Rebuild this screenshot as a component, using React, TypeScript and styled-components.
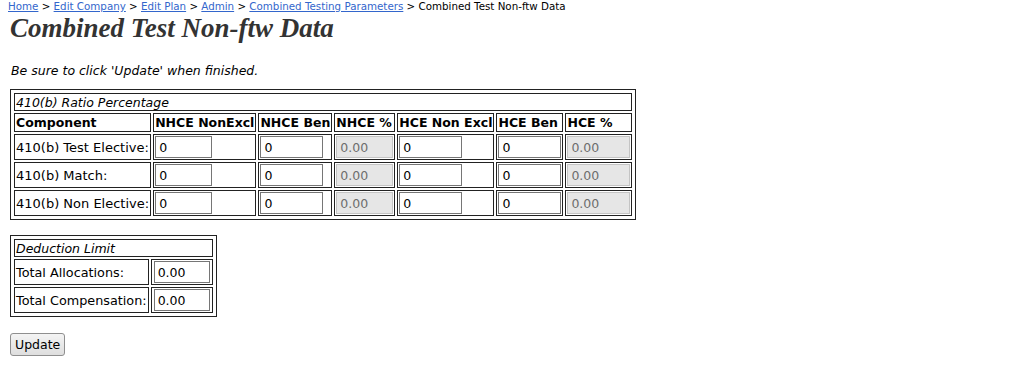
import styled, { createGlobalStyle } from 'styled-components';

const GlobalStyle = createGlobalStyle`
  html, body {
    margin: 0;
    background: #fff;
  }
  body {
    padding: 0 8px 8px 10px;
    font-family: 'DejaVu Sans', Verdana, sans-serif;
    font-size: 13px;
    color: #000;
  }
`;

const Breadcrumb = styled.div`
  font-size: 10.3px;
  line-height: 13px;
  margin-left: -2px;
  color: #000;
`;

const Crumb = styled.a`
  color: #3366cc;
  text-decoration: underline;
`;

const Title = styled.h1`
  margin: 0;
  font-family: 'Liberation Serif', 'Times New Roman', serif;
  font-style: italic;
  font-weight: bold;
  font-size: 27px;
  line-height: 30px;
  color: #333;
`;

const Note = styled.p`
  margin: 20px 0 10px 1px;
  font-style: italic;
  font-size: 12.5px;
  line-height: 16px;
`;

const Grid = styled.table`
  border: 1px solid #222;
  border-collapse: separate;
  border-spacing: 2px;
  padding: 1px;
  margin-bottom: 15px;
`;

const Caption = styled.td`
  border: 1px solid #222;
  font-style: italic;
  font-size: 12.5px;
  padding: 0 1px;
  height: 16px;
`;

const Head = styled.th`
  border: 1px solid #222;
  text-align: left;
  font-weight: bold;
  font-size: 12.5px;
  padding: 0 1px;
  height: 17px;
  white-space: nowrap;
`;

const Label = styled.td<{ $small?: boolean }>`
  border: 1px solid #222;
  padding: 0 1px;
  height: 24px;
  white-space: nowrap;
  font-size: ${({ $small }) => ($small ? '12.8px' : '13px')};
`;

const FieldCell = styled.td<{ $pad?: number }>`
  border: 1px solid #222;
  padding: 1px ${({ $pad }) => $pad ?? 1}px;
`;

const Field = styled.input<{ $w: number }>`
  box-sizing: border-box;
  width: ${({ $w }) => $w}px;
  height: 22px;
  border: 1px solid #767676;
  padding: 0 3px;
  font-family: 'DejaVu Sans', Verdana, sans-serif;
  font-size: 12.5px;
  color: #000;
  background: #fff;
  display: block;
  &:disabled {
    background: #e6e6e6;
    border-color: #c4c4c4;
    color: #6d6d6d;
  }
`;

const UpdateButton = styled.button`
  font-family: 'DejaVu Sans', Verdana, sans-serif;
  font-size: 12.5px;
  height: 23px;
  padding: 0 4px;
  margin-top: 1px;
  border: 1px solid #8f8f8f;
  border-radius: 3px;
  background: linear-gradient(#f4f4f4, #dedede);
  color: #000;
`;

const rows = ['410(b) Test Elective:', '410(b) Match:', '410(b) Non Elective:'];
const heads = ['Component', 'NHCE NonExcl', 'NHCE Ben', 'NHCE %', 'HCE Non Excl', 'HCE Ben', 'HCE %'];
const fields = [
  { w: 57, v: '0' },
  { w: 63, v: '0' },
  { w: 57, v: '0.00', off: true },
  { w: 63, v: '0' },
  { w: 63, v: '0' },
  { w: 63, v: '0.00', off: true },
];

export default function App() {
  return (
    <>
      <GlobalStyle />
      <Breadcrumb>
        <Crumb href="#">Home</Crumb> &gt; <Crumb href="#">Edit Company</Crumb> &gt;{' '}
        <Crumb href="#">Edit Plan</Crumb> &gt; <Crumb href="#">Admin</Crumb> &gt;{' '}
        <Crumb href="#">Combined Testing Parameters</Crumb> &gt; Combined Test Non-ftw Data
      </Breadcrumb>
      <Title>Combined Test Non-ftw Data</Title>
      <Note>Be sure to click 'Update' when finished.</Note>

      <Grid>
        <tbody>
          <tr>
            <Caption colSpan={7}>410(b) Ratio Percentage</Caption>
          </tr>
          <tr>
            {heads.map((h) => (
              <Head key={h}>{h}</Head>
            ))}
          </tr>
          {rows.map((r) => (
            <tr key={r}>
              <Label>{r}</Label>
              {fields.map((f, i) => (
                <FieldCell key={i}>
                  <Field $w={f.w} defaultValue={f.v} disabled={f.off} />
                </FieldCell>
              ))}
            </tr>
          ))}
        </tbody>
      </Grid>

      <Grid>
        <tbody>
          <tr>
            <Caption colSpan={2}>Deduction Limit</Caption>
          </tr>
          <tr>
            <Label $small>Total Allocations:</Label>
            <FieldCell $pad={2}><Field $w={56} defaultValue="0.00" /></FieldCell>
          </tr>
          <tr>
            <Label $small>Total Compensation:</Label>
            <FieldCell $pad={2}><Field $w={56} defaultValue="0.00" /></FieldCell>
          </tr>
        </tbody>
      </Grid>

      <UpdateButton>Update</UpdateButton>
    </>
  );
}
